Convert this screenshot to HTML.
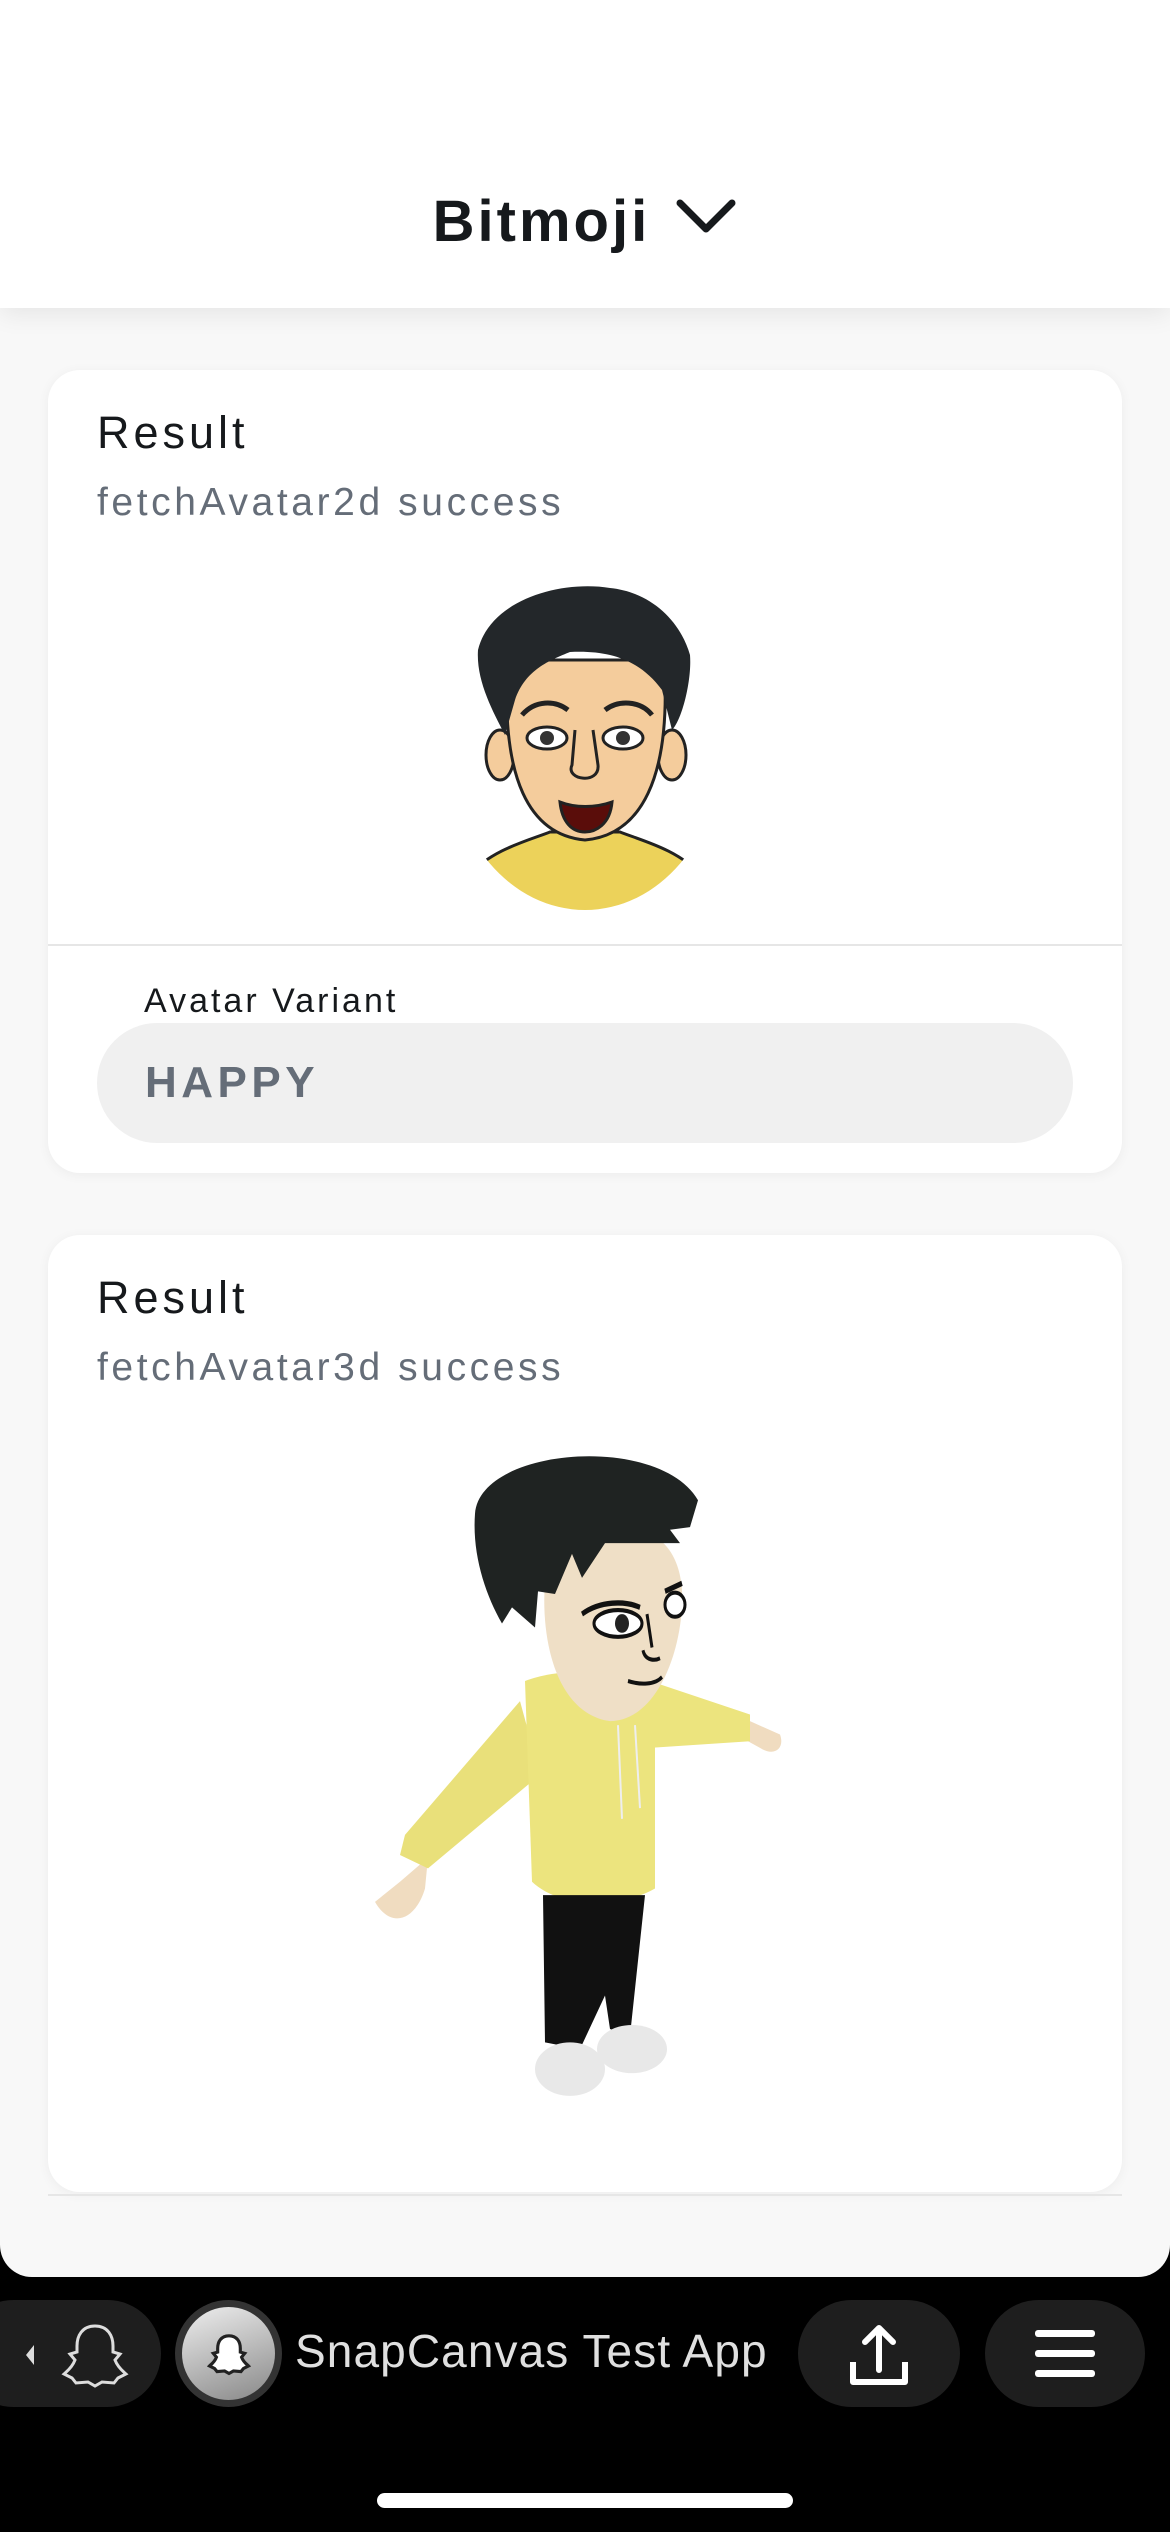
<!DOCTYPE html>
<html><head><meta charset="utf-8"><style>
*{margin:0;padding:0;box-sizing:border-box}
body{width:1170px;height:2532px;background:#000;position:relative;overflow:hidden;font-family:"Liberation Sans",sans-serif}
.main{position:absolute;left:0;top:0;width:1170px;height:2277px;background:#f8f8f8;border-radius:0 0 32px 32px;overflow:hidden}
.hdr{position:absolute;left:0;top:0;width:1170px;height:308px;background:#fff;box-shadow:0 6px 24px rgba(0,0,0,0.08)}
.title{position:absolute;top:188px;left:0;width:1170px;text-align:center;font-size:58px;font-weight:600;color:#16191c;letter-spacing:3px}
.card{position:absolute;left:48px;width:1074px;background:#fff;border-radius:32px;box-shadow:0 2px 12px rgba(0,0,0,0.05);overflow:hidden}
.res{position:absolute;left:49px;font-size:45px;color:#16191c;letter-spacing:4px}
.sub{position:absolute;left:49px;font-size:39px;color:#656d78;letter-spacing:3.6px}
.pill{position:absolute;background:#1e1e1e;border-radius:54px;top:2300px;height:107px}
</style></head><body>
<div class="main">
<div class="hdr"><div class="title">Bitmoji <svg width="62" height="40" viewBox="0 0 62 40" style="margin-left:6px;vertical-align:4px"><path d="M5 6 L31 32 L57 6" stroke="#16191c" stroke-width="7" fill="none" stroke-linecap="round" stroke-linejoin="round"/></svg></div></div>

<div class="card" style="top:370px;height:803px">
<div class="res" style="top:37px">Result</div>
<div class="sub" style="top:111px">fetchAvatar2d success</div>
<div style="position:absolute;left:0;top:574px;width:1074px;height:2px;background:#e6e6e6"></div>
<div style="position:absolute;left:96px;top:612px;font-size:34px;color:#16191c;letter-spacing:3px">Avatar Variant</div>
<div style="position:absolute;left:49px;top:653px;width:976px;height:120px;background:#f0f0f0;border-radius:60px"></div>
<div style="position:absolute;left:97px;top:688px;font-size:44px;font-weight:bold;color:#656d78;letter-spacing:4.5px">HAPPY</div>
</div>
<svg style="position:absolute;left:450px;top:570px" width="270" height="360" viewBox="0 0 270 360">
<defs><clipPath id="c"><ellipse cx="135" cy="180" rx="135" ry="160"/></clipPath></defs>
<g clip-path="url(#c)">
<path d="M20 305 C40 280 80 270 100 262 L170 262 C190 270 230 280 250 305 L260 360 L10 360Z" fill="#ecd25a" stroke="#222" stroke-width="3"/>
</g>
<ellipse cx="50" cy="185" rx="14" ry="25" fill="#f4cc9c" stroke="#222" stroke-width="3"/>
<ellipse cx="222" cy="185" rx="14" ry="25" fill="#f4cc9c" stroke="#222" stroke-width="3"/>
<path d="M58 90 C50 210 80 265 135 270 C190 265 222 210 214 90 Z" fill="#f4cc9c" stroke="#222" stroke-width="3"/>
<path d="M28 80 C40 30 110 10 160 18 C200 22 230 50 240 85 C242 110 232 150 222 160 L212 120 C190 90 160 80 120 82 C100 90 75 100 65 130 L55 165 C42 140 26 110 28 80Z" fill="#23272a"/>
<path d="M72 145 C85 130 105 130 118 140 M155 140 C168 130 190 130 202 145" stroke="#222" stroke-width="5" fill="none"/>
<ellipse cx="97" cy="168" rx="20" ry="11" fill="#fff" stroke="#222" stroke-width="3"/><circle cx="97" cy="168" r="7" fill="#333"/>
<ellipse cx="173" cy="168" rx="20" ry="11" fill="#fff" stroke="#222" stroke-width="3"/><circle cx="173" cy="168" r="7" fill="#333"/>
<path d="M125 160 L122 195 C115 210 150 215 148 195 L143 160" stroke="#222" stroke-width="3" fill="none"/>
<path d="M110 232 C125 238 145 238 162 232 C160 255 145 262 135 262 C122 262 112 252 110 232Z" fill="#5a0d0a" stroke="#222" stroke-width="3"/>
</svg>

<div class="card" style="top:1235px;height:957px">
<div class="res" style="top:37px">Result</div>
<div class="sub" style="top:111px">fetchAvatar3d success</div>
</div>
<div style="position:absolute;left:48px;top:2194px;width:1074px;height:2px;background:#e6e6e6"></div>
<svg style="position:absolute;left:360px;top:1420px" width="450" height="700" viewBox="0 0 450 523" preserveAspectRatio="none">
<path d="M40 345 L68 327 L65 350 C55 375 30 380 15 360Z" fill="#f0dcc0"/>
<path d="M390 225 L420 235 C425 245 415 252 400 245 L388 240Z" fill="#f0dcc0"/>
<path d="M290 195 L390 220 L390 240 L290 245Z" fill="#ece47e"/>
<path d="M160 210 L45 310 L40 325 L68 335 L180 265Z" fill="#e9e07a"/>
<path d="M165 195 C200 185 260 185 295 200 L295 350 C260 365 200 365 172 345 Z" fill="#ece47e"/>
<path d="M258 228 L262 298 M275 228 L280 290" stroke="#eee" stroke-width="2"/>
<path d="M183 355 L285 355 L270 460 L250 455 L245 430 L220 470 L185 465Z" fill="#111"/>
<ellipse cx="210" cy="485" rx="35" ry="20" fill="#e8e8e8"/>
<ellipse cx="272" cy="470" rx="35" ry="18" fill="#e8e8e8"/>
<path d="M185 120 C180 170 200 220 250 225 C290 225 318 185 322 140 C325 100 300 80 260 80 C220 80 190 95 185 120Z" fill="#efdfc6"/>
<path d="M115 70 C120 20 300 10 338 60 L330 80 L310 82 L320 92 L245 92 L222 118 L212 100 L195 130 L178 128 L175 155 L152 140 L142 152 C125 130 112 100 115 70Z" fill="#1f2322"/>
<path d="M222 145 C240 135 265 135 280 140 M305 128 L322 122" stroke="#111" stroke-width="4" fill="none"/>
<ellipse cx="258" cy="152" rx="24" ry="10" fill="#fff" stroke="#111" stroke-width="3"/><circle cx="262" cy="152" r="7" fill="#222"/>
<ellipse cx="315" cy="138" rx="10" ry="9" fill="#fff" stroke="#111" stroke-width="3"/>
<path d="M287 145 L292 170 M283 172 C285 180 295 180 300 178 M268 195 C280 198 295 198 302 192" stroke="#111" stroke-width="3" fill="none"/>
</svg>
</div>

<div class="pill" style="left:-40px;width:201px"></div>
<svg style="position:absolute;left:22px;top:2340px" width="110" height="30" viewBox="0 0 110 30"><path d="M12 5 L4 15 L12 25Z" fill="#ddd"/></svg>
<svg style="position:absolute;left:60px;top:2320px" width="70" height="70" viewBox="0 0 70 70"><path d="M35 6 C22 6 17 16 17 26 L17 32 L10 34 L15 40 C12 48 6 52 4 54 L12 58 L16 63 L28 62 L35 66 L42 62 L54 63 L58 58 L66 54 C64 52 58 48 55 40 L60 34 L53 32 L53 26 C53 16 48 6 35 6Z" fill="none" stroke="#ddd" stroke-width="3"/></svg>
<div style="position:absolute;left:175px;top:2300px;width:107px;height:107px;border-radius:50%;background:#333"></div>
<div style="position:absolute;left:182px;top:2307px;width:93px;height:93px;border-radius:50%;background:linear-gradient(160deg,#eee,#888)"></div>
<svg style="position:absolute;left:207px;top:2331px" width="44" height="46" viewBox="0 0 70 70"><path d="M35 6 C22 6 17 16 17 26 L17 32 L10 34 L15 40 C12 48 6 52 4 54 L12 58 L16 63 L28 62 L35 66 L42 62 L54 63 L58 58 L66 54 C64 52 58 48 55 40 L60 34 L53 32 L53 26 C53 16 48 6 35 6Z" fill="#fff" stroke="#222" stroke-width="5"/></svg>
<div style="position:absolute;left:295px;top:2324px;font-size:46px;color:#e0e0e0;letter-spacing:1.1px">SnapCanvas Test App</div>
<div class="pill" style="left:798px;width:162px"></div>
<svg style="position:absolute;left:847px;top:2320px" width="64" height="70" viewBox="0 0 64 70"><path d="M32 50 L32 8 M18 22 L32 8 L46 22" stroke="#fff" stroke-width="6" fill="none" stroke-linecap="round" stroke-linejoin="round"/><path d="M6 42 L6 62 L58 62 L58 42" stroke="#fff" stroke-width="6" fill="none" stroke-linejoin="round"/></svg>
<div class="pill" style="left:985px;width:160px"></div>
<div style="position:absolute;left:1035px;top:2330px;width:60px;height:7px;background:#fff;border-radius:3px"></div>
<div style="position:absolute;left:1035px;top:2350px;width:60px;height:7px;background:#fff;border-radius:3px"></div>
<div style="position:absolute;left:1035px;top:2370px;width:60px;height:7px;background:#fff;border-radius:3px"></div>
<div style="position:absolute;left:377px;top:2493px;width:416px;height:15px;background:#fff;border-radius:8px"></div>
</body></html>
